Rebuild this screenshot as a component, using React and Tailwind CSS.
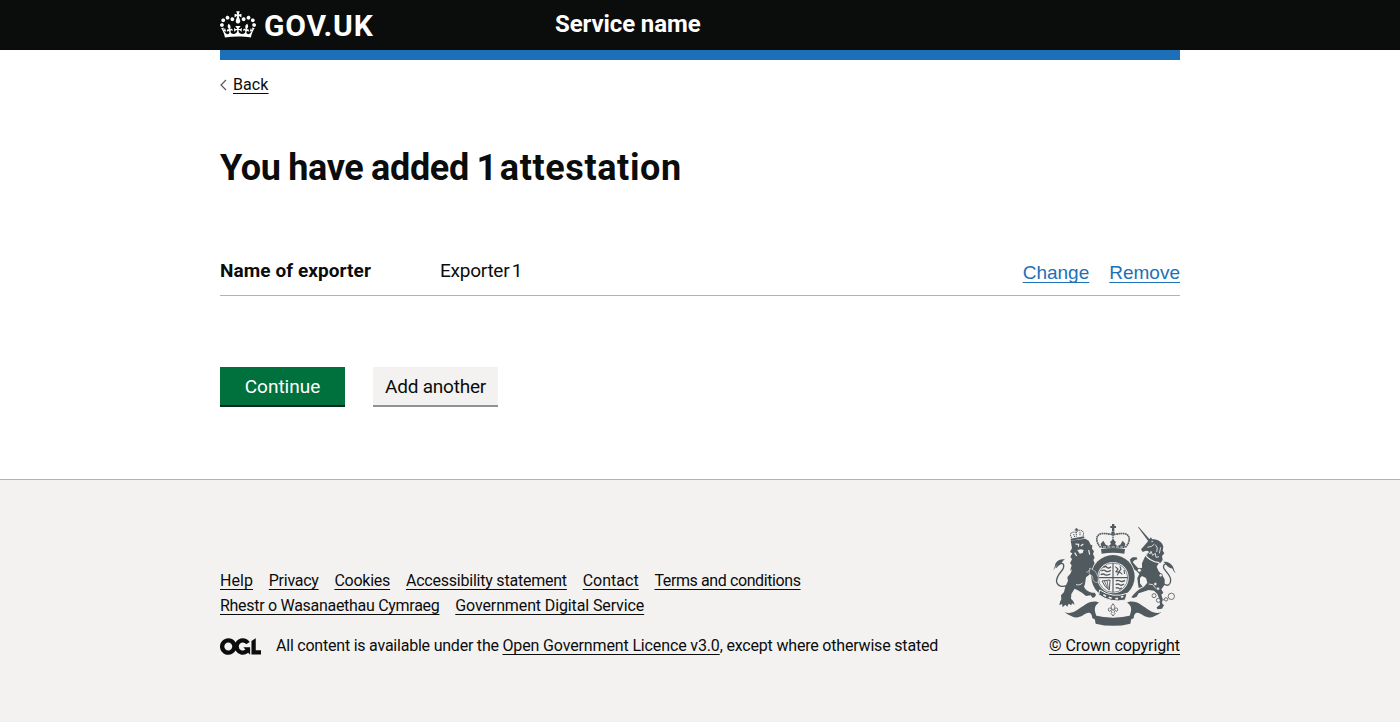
const footerRows = [
  [
    ["Help", "tracking-[0.05px]"],
    ["Privacy", "tracking-[-0.27px]"],
    ["Cookies", "tracking-[-0.24px]"],
    ["Accessibility statement", "tracking-[-0.22px]"],
    ["Contact", "tracking-[0.01px]"],
    ["Terms and conditions", "tracking-[-0.4px]"],
  ],
  [
    ["Rhestr o Wasanaethau Cymraeg", "tracking-[-0.29px]"],
    ["Government Digital Service", "tracking-[-0.12px]"],
  ],
];

const footerLink = "underline decoration-1 underline-offset-[3px] [text-decoration-skip-ink:none]";

function Crown() {
  return (
    <svg viewBox="0 0 132 97" className="h-[27px] w-9 shrink-0" fill="currentColor" aria-hidden="true">
      <path
        fillRule="evenodd"
        d="M25 30.2c3.5 1.5 7.7-.2 9.1-3.7 1.5-3.6-.2-7.8-3.9-9.2-3.6-1.4-7.6.3-9.1 3.9-1.4 3.5.3 7.5 3.9 9zM9 39.5c3.6 1.5 7.8-.2 9.2-3.7 1.5-3.6-.2-7.8-3.9-9.1-3.6-1.5-7.6.2-9.1 3.8-1.4 3.5.3 7.5 3.8 9zM4.4 57.2c3.5 1.5 7.7-.2 9.1-3.8 1.5-3.6-.2-7.7-3.9-9.1-3.5-1.5-7.6.3-9.1 3.8-1.4 3.5.3 7.6 3.9 9.1zm38.3-21.4c3.5 1.5 7.7-.2 9.1-3.8 1.5-3.6-.2-7.7-3.9-9.1-3.6-1.5-7.6.3-9.1 3.8-1.3 3.6.4 7.7 3.9 9.1zm64.4-5.6c-3.6 1.5-7.8-.2-9.1-3.7-1.5-3.6.2-7.8 3.8-9.2 3.6-1.4 7.7.3 9.2 3.9 1.3 3.5-.4 7.5-3.9 9zm15.9 9.3c-3.6 1.5-7.7-.2-9.1-3.7-1.5-3.6.2-7.8 3.7-9.1 3.6-1.5 7.7.2 9.2 3.8 1.5 3.5-.3 7.5-3.8 9zm4.7 17.7c-3.6 1.5-7.8-.2-9.2-3.8-1.5-3.6.2-7.7 3.9-9.1 3.6-1.5 7.7.3 9.2 3.8 1.3 3.5-.4 7.6-3.9 9.1zM89.3 35.8c-3.6 1.5-7.8-.2-9.2-3.8-1.4-3.6.2-7.7 3.9-9.1 3.6-1.5 7.7.3 9.2 3.8 1.4 3.6-.3 7.7-3.9 9.1zM69.7 17.7l8.9 4.7V9.3l-8.9 2.8c-.2-.3-.5-.6-.9-.9L72.4 0H59.6l3.5 11.2c-.3.3-.6.5-.9.9l-8.8-2.8v13.1l8.8-4.7c.3.3.6.7.9.9l-5 15.4v.1c-.2.8-.4 1.6-.4 2.4 0 4.1 3.1 7.5 7 8.1h.2c.3 0 .7.1 1 .1.4 0 .7 0 1-.1h.2c4-.6 7.1-4.1 7.1-8.1 0-.8-.1-1.7-.4-2.4V34l-5.1-15.4c.4-.2.7-.6 1-.9zM66 92.8c16.9 0 32.8 1.1 47.1 3.2 4-16.9 8.9-26.7 14-33.5l-9.6-3.4c1 4.9 1.1 7.2 0 10.2-1.5-1.4-3-4.3-4.2-8.7L108.6 76c2.8-2 5-3.2 7.5-3.3-4.4 9.4-10 11.9-13.6 11.2-4.3-.8-6.3-4.6-5.6-7.9 1-4.7 5.7-5.9 8-.5 4.3-8.7-3-11.4-7.6-8.8 7.1-7.2 7.9-13.5 2.1-21.1-8 6.1-8.1 12.3-4.5 20.8-4.7-5.4-12.1-2.5-9.5 6.2 3.4-5.2 7.9-2 7.2 3.1-.6 4.3-6.4 7.8-13.5 7.2-10.3-.9-10.9-8-11.2-13.8 2.5-.5 7.1 1.8 11 7.3L80.2 60c-4.1 4.4-8 5.3-12.3 5.4 1.4-4.4 8-11.6 8-11.6H55.5s6.4 7.2 7.9 11.6c-4.2-.1-8-1-12.3-5.4l1.4 16.4c3.9-5.5 8.5-7.7 10.9-7.3-.3 5.8-.9 12.8-11.1 13.8-7.2.6-12.9-2.9-13.5-7.2-.7-5 3.8-8.3 7.1-3.1 2.7-8.7-4.6-11.6-9.4-6.2 3.7-8.5 3.6-14.7-4.6-20.8-5.8 7.6-5 13.9 2.2 21.1-4.7-2.6-11.9.1-7.7 8.8 2.3-5.5 7.1-4.2 8.1.5.7 3.3-1.3 7.1-5.7 7.9-3.5.7-9-1.8-13.5-11.2 2.5.1 4.7 1.3 7.5 3.3l-4.7-15.4c-1.2 4.4-2.7 7.2-4.3 8.7-1.1-3-.9-5.3 0-10.2l-9.5 3.4c5 6.9 9.9 16.7 14 33.5 14.8-2.1 30.8-3.2 47.7-3.2z"
      />
    </svg>
  );
}

function OglLogo() {
  return (
    <svg viewBox="0 0 483.2 195.7" className="h-[17px] w-[41px] shrink-0" fill="currentColor" aria-hidden="true">
      <path d="M421.5 142.8V.1l-50.7 32.3v161.1h112.4v-50.7zm-122.3-9.6A47.12 47.12 0 0 1 221 97.8c0-26 21.1-47.1 47.1-47.1 16.7 0 31.4 8.7 39.7 21.8l42.7-27.2A97.63 97.63 0 0 0 268.1 0c-36.5 0-68.3 20.1-85.1 49.7A98 98 0 0 0 97.8 0C43.9 0 0 43.9 0 97.8s43.9 97.8 97.8 97.8c36.5 0 68.3-20.1 85.1-49.7a97.76 97.76 0 0 0 149.6 25.4l19.4 22.2h3v-87.8h-80l24.3 27.5zM97.8 145c-26 0-47.1-21.1-47.1-47.1s21.1-47.1 47.1-47.1 47.1 21.1 47.1 47.1S123.8 145 97.8 145" />
    </svg>
  );
}

function RoyalArms() {
  const g = "#505a5f";
  const bg = "#f3f2f1";
  return (
    <svg viewBox="30 30 390 330" className="h-[110px] w-[130px] shrink-0" fill={g} stroke="none" aria-hidden="true">
      {/* lion's tail */}
      <path d="M86 224c-12 8-32 8-36-8-3-14 9-26 17-36 6-8 6-20-2-20-9 0-11 9-18 13" fill="none" stroke={g} strokeWidth="4" />
      <path d="M39 180c6-4 4-12 8-20 6-10 16-14 28-12-7 4-8 9-12 13-5 6-14 3-17 10-1 4-3 7-7 9z" />
      {/* lion */}
      <path d="M92 92L136 86 146 92 152 104 157 106 156 116 162 124 159 132 164 143 160 150 164 160 160 168 168 176 174 190 173 202 178 212 170 210 164 216 160 206 162 198 152 190 146 196 138 202 135 222 132 230C138 242 150 248 164 248L168 254 165 260 158 264 152 256 138 258 126 248 112 240 104 236 94 252 93 266 100 274 104 284 96 280 94 286 86 281 82 290 76 284 68 292 66 282 58 286 60 276 64 268 63 256 72 246 76 230 84 212 82 202 92 190 96 178 90 182 95 166 90 160 96 148 91 140 97 130 90 126 96 114z" />
      <path d="M106 102l10 1-1 7M122 108l8-6M104 128l6 10M146 120l3 14" fill="none" stroke={bg} strokeWidth="3.5" />
      <path d="M112 120l10-2 9 2-3 9-9 2z" fill={bg} />
      <path d="M140 188c8-10 16-8 22-2M148 176c4 4 10 2 14 6M108 224c8 2 16 0 20-6" fill="none" stroke={bg} strokeWidth="2.5" />
      {/* lion's crown */}
      <path d="M92 86l40-7 1 6-40 7z" />
      <path d="M95 84c-9-14 0-20 13-17 10-12 28-6 21 11M109 66v14M101 72l3 9M120 66l0 10" fill="none" stroke={g} strokeWidth="3" strokeDasharray="4 1.8" />
      <path d="M107 55h5v9h-5zM104 58h11v3h-11z" />
      {/* central crown */}
      <path d="M216 42h7v6h5v6h-5v10h-7V54h-5v-6h5z" />
      <circle cx="219" cy="69" r="5.5" />
      <g fill="none" stroke={g} strokeWidth="5" strokeDasharray="5 1.4">
        <path d="M182 112c-17-17-15-39 3-41 16-2 28 3 34 3" />
        <path d="M256 112c17-17 15-39-3-41-16-2-28 3-34 3" />
        <path d="M219 74v24" strokeWidth="4" />
      </g>
      <path d="M182 101l8-9 7 12 9 4 7-6-3-6 9-8 9 8-3 6 7 6 9-4 7-12 8 9-3 13H185z" />
      <path d="M183 117q36-6 72 0l-2 14q-34-5-68 0z" />
      <path d="M189 111h60" fill="none" stroke={bg} strokeWidth="2.5" strokeDasharray="9 4" />
      {/* unicorn's tail */}
      <path d="M372 222c12 8 20 2 20-12 0-14-14-24-20-34-4-8 0-16 8-14 7 2 8 9 14 12" fill="none" stroke={g} strokeWidth="4" />
      <path d="M408 188c-7-3-5-14-11-21-7-9-17-13-27-11 8 4 8 9 12 13 6 6 13 2 17 10 2 5 4 8 9 9z" />
      {/* unicorn */}
      <path d="M293 50l4 2 33 37-5 5z" />
      <path d="M327 90L332 82 337 88C354 88 367 96 370 110L368 122 373 130 366 138 368 150 362 158 356 160 350 170 356 184 366 194 374 208 374 224 364 238 370 248 364 254 368 266 366 280 372 286 366 296 352 298 350 292 360 284 358 268 352 252 342 242 326 240 308 246 296 250 290 260 281 264 274 262 280 254 288 246 298 238 312 230 322 218 318 204 306 198 300 204 300 220 308 230 296 234 294 222 292 204 298 192 290 184 282 178 276 166 272 158 270 148 278 142 290 142 292 148 284 150 278 156 286 166 294 174 306 174 306 160 312 146 318 134 326 124 318 122 308 126 303 118 314 106z" />
      <path d="M322 112l13-3 8-7M334 95l5-1M346 104l6 10-2 12M362 112l-4 18" fill="none" stroke={bg} strokeWidth="2.5" />
      <path d="M314 132c10 16 26 24 44 26" fill="none" stroke={bg} strokeWidth="4" />
      <path d="M312 138l2-10 7 6 2-10 7 8 3-8 5 12 8-6 2 12 9-2" fill="none" stroke={bg} strokeWidth="2.5" />
      <path d="M326 222l12 2 10 12 12 2" fill="none" stroke={bg} strokeWidth="2.5" />
      <g fill={bg} stroke={g} strokeWidth="2.5">
        <circle cx="298" cy="181" r="6" />
        <circle cx="362" cy="196" r="5" />
        <circle cx="346" cy="222" r="5" />
        <circle cx="354" cy="236" r="5" />
        <circle cx="342" cy="257" r="6" />
        <circle cx="355" cy="271" r="6" />
        <circle cx="394" cy="259" r="9.5" />
        <circle cx="378" cy="268" r="5" />
        <path d="M361 271l12-2" />
      </g>
      {/* garter and shield */}
      <circle cx="219" cy="200" r="67" fill={bg} />
      <circle cx="219" cy="200" r="65" />
      <circle cx="219" cy="203" r="47" fill={bg} />
      <circle cx="219" cy="203" r="44" fill="none" stroke={g} strokeWidth="2" />
      <path d="M219 159v88M175 203h88" stroke={g} strokeWidth="3.5" />
      <g fill="none" stroke={g} strokeWidth="4">
        <path d="M190 172q7-5 11 0t12-2M184 183q8-5 13 0t15-2M182 194q8-4 13 0t16-2" />
        <path d="M227 213q7-4 13 0t15-2M227 224q7-4 12 0t13-2M227 235q5-4 9 0t9-2" />
        <path d="M226 170l8 7-6 8 9 2-6 9M240 169l3 9-6 6 10 9M252 180l2 12" strokeWidth="3.5" />
        <path d="M186 213l24-3-2 30q-14-8-22-27z" strokeWidth="3" />
        <path d="M193 213l9 20M201 212l4 24" strokeWidth="2.5" />
      </g>
      {/* forelegs over the garter */}
      <path d="M150 174l16 10 9 18-1 14-6 2-8-6-3-14-10-6z" stroke={bg} strokeWidth="1.5" />
      {/* garter buckle */}
      <path d="M179 240q40 26 82 10l-5 20q-44 10-80-16z" stroke={bg} strokeWidth="3" />
      <path d="M190 254l8 5M206 262l9 3M226 266l8 0M243 262l7-3" stroke={bg} strokeWidth="5" />
      {/* ribbon */}
      <path d="M73 306c22 10 40-8 62-22 15-11 33-12 42-6-14 8-15 20-9 36l2 16-13-5c-2-22-14-20-28-9-18 11-30 8-56-10z" />
      <path d="M365 306c-22 10-40-8-62-22-15-11-33-12-42-6 14 8 15 20 9 36l-2 16 13-5c2-22 14-20 28-9 18 11 30 8 56-10z" />
      <path d="M162 316q57 14 114 0l-5 25q-52 13-104 0z" />
      {/* fleur */}
      <path
        d="M219 281l6 9-4 11c4-10 14-8 12-1-1 5-6 5-7 1l-4 6 3 3-6 8-6-8 3-3-4-6c-1 4-6 4-7-1-2-7 8-9 12 1l-4-11z"
        fill={bg}
        stroke={g}
        strokeWidth="2.5"
      />
    </svg>
  );
}

export default function App() {
  return (
    <div className="flex min-h-[722px] flex-col bg-white font-['Roboto','Liberation_Sans',sans-serif] text-[#0b0c0c]">
      <header className="h-[50px] bg-[#0b0c0c] text-white">
        <div className="mx-auto flex w-[960px] items-start">
          <div className="flex w-[335px] items-start gap-2 pt-[11px]">
            <Crown />
            <span className="-mt-[3px] text-[30px] leading-9 font-bold tracking-[0.8px]">GOV.UK</span>
          </div>
          <span className="pt-[9px] text-2xl leading-[30px] font-bold tracking-[-0.1px]">Service name</span>
        </div>
      </header>

      <div className="mx-auto h-[419px] w-[960px] shrink-0">
        <div className="h-2.5 bg-[#1d70b8]" />
        <a className="mt-[15px] flex h-5 items-center gap-1.5 text-base leading-5">
          <svg viewBox="0 0 7 12" className="h-3 w-[7px]" fill="none" stroke="#505a5f" strokeWidth="1.2" aria-hidden="true">
            <path d="M6 1L1 6l5 5" />
          </svg>
          <span className={footerLink + " tracking-[0.1px]"}>Back</span>
        </a>

        <h1 className="mt-[53px] text-4xl leading-10 font-bold tracking-[-0.34px] [word-spacing:-1px]">
          You have added <span className="tracking-[-5px]">1</span> <span className="tracking-[0.62px]">attestation</span>
        </h1>

        <div className="mt-[70px] flex h-[38px] border-b border-[#b1b4b6] text-[19px] leading-[25px]">
          <div className="w-[220px] font-bold tracking-[0.08px]">Name of exporter</div>
          <div className="grow tracking-[-0.25px] [word-spacing:-2px]">Exporter 1</div>
          <div className="flex gap-5 pt-0.5 font-['Liberation_Sans',Arial,sans-serif] text-[#1d70b8]">
            <a className={footerLink}>Change</a>
            <a className={footerLink}>Remove</a>
          </div>
        </div>

        <div className="mt-[71px] flex gap-7 text-[19px] leading-[38px]">
          <button className="h-10 w-[125px] border-b-2 border-[#002d18] bg-[#00703c] pt-0.5 leading-9 text-white">Continue</button>
          <button className="h-10 w-[125px] border-b-2 border-[#929191] bg-[#f3f2f1] pt-0.5 leading-9 tracking-[-0.22px]">Add another</button>
        </div>
      </div>

      <div className="mt-[10px] grow border-t border-[#b1b4b6] bg-[#f3f2f1]">
        <footer className="mx-auto flex w-[960px] items-end justify-between pt-10 text-base leading-5">
          <div>
            {footerRows.map((row, i) => (
              <ul key={i} className="mb-[5px] flex gap-[15.8px]">
                {row.map(([label, tracking]) => (
                  <li key={label}>
                    <a className={footerLink + " " + tracking}>{label}</a>
                  </li>
                ))}
              </ul>
            ))}
            <div className="mt-5 flex items-center gap-[15px]">
              <OglLogo />
              <p className="whitespace-nowrap">
                <span className="tracking-[-0.22px]">All content is available under the </span>
                <a className={footerLink + " tracking-[-0.14px]"}>Open Government Licence v3.0</a>
                <span className="tracking-[-0.19px]">, except where otherwise stated</span>
              </p>
            </div>
          </div>
          <div className="flex flex-col items-end gap-1.5">
            <RoyalArms />
            <a className={footerLink + " tracking-[-0.09px]"}>© Crown copyright</a>
          </div>
        </footer>
      </div>
    </div>
  );
}
